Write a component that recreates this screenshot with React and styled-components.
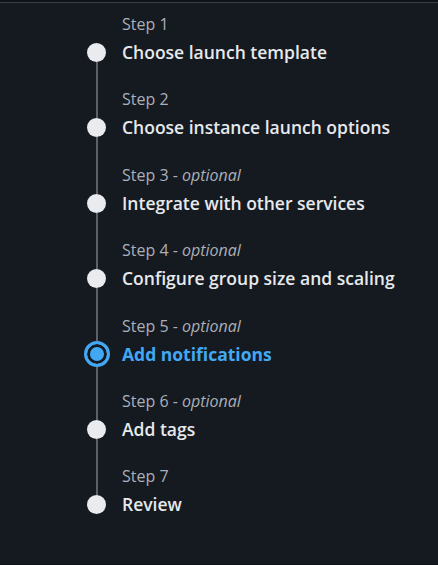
import React from "react";
import styled, { createGlobalStyle } from "styled-components";

const steps = [
  { title: "Choose launch template" },
  { title: "Choose instance launch options" },
  { title: "Integrate with other services", optional: true },
  { title: "Configure group size and scaling", optional: true },
  { title: "Add notifications", optional: true, active: true },
  { title: "Add tags", optional: true },
  { title: "Review" },
];

export default function App() {
  return (
    <>
      <GlobalStyle />
      <Panel>
        <StepList>
          {steps.map((step, i) => (
            <Step key={step.title}>
              <Rail>
                <Segment $visible={i > 0} $height={step.active ? 25 : 29} />
                <Dot $active={step.active} />
                <Segment $visible={i < steps.length - 1} $grow />
              </Rail>
              <Body>
                <Label>
                  Step {i + 1}
                  {step.optional && (
                    <>
                      {" - "}
                      <em>optional</em>
                    </>
                  )}
                </Label>
                <Title $active={step.active}>{step.title}</Title>
              </Body>
            </Step>
          ))}
        </StepList>
      </Panel>
    </>
  );
}

const GlobalStyle = createGlobalStyle`
  html, body {
    margin: 0;
    padding: 0;
    background: #0f1217;
  }
  body {
    font-family: "Open Sans", "Noto Sans", sans-serif;
  }
`;

const Panel = styled.main`
  margin-top: 2px;
  border-top: 1px solid #3a3f48;
  background: #151920;
  min-height: 562px;
  padding: 11px 0 0 83px;
  box-sizing: border-box;
`;

const StepList = styled.ol`
  list-style: none;
  margin: 0;
  padding: 0;
`;

const Step = styled.li`
  display: grid;
  grid-template-columns: 27px 1fr;
  column-gap: 12px;
`;

const Rail = styled.div`
  display: flex;
  flex-direction: column;
  align-items: center;
`;

const Segment = styled.span`
  width: 2px;
  background: ${(p) => (p.$visible ? "#5a616b" : "transparent")};
  height: ${(p) => (p.$grow ? "auto" : `${p.$height}px`)};
  flex: ${(p) => (p.$grow ? "1 1 auto" : "0 0 auto")};
`;

const Dot = styled.span`
  box-sizing: border-box;
  flex: 0 0 auto;
  width: ${(p) => (p.$active ? "26px" : "19px")};
  height: ${(p) => (p.$active ? "26px" : "19px")};
  border-radius: 50%;
  background: ${(p) => (p.$active ? "#42a8f4" : "#e9ebee")};
  border: ${(p) => (p.$active ? "3px solid #42a8f4" : "none")};
  box-shadow: ${(p) => (p.$active ? "inset 0 0 0 3px #151920" : "none")};
`;

const Body = styled.div`
  display: flex;
  flex-direction: column;
  padding-bottom: 25.4px;
`;

const Label = styled.span`
  font-size: 16px;
  line-height: 20px;
  color: #aab0b8;

  em {
    font-style: italic;
  }
`;

const Title = styled.span`
  margin-top: 6px;
  font-size: 17.5px;
  line-height: 24px;
  font-weight: ${(p) => (p.$active ? 700 : 600)};
  color: ${(p) => (p.$active ? "#42a8f4" : "#e6e9ec")};
`;
